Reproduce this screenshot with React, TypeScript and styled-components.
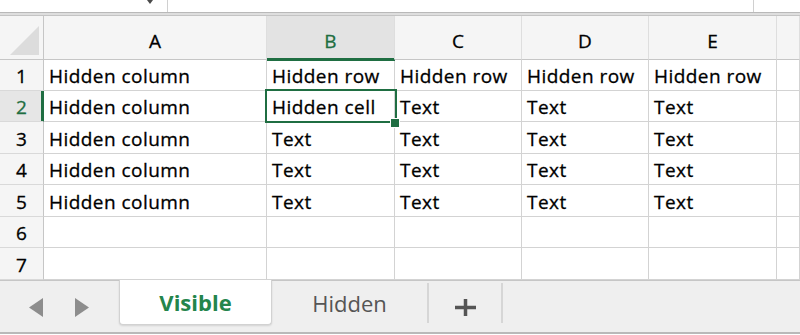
import styled, { createGlobalStyle, css } from 'styled-components';

const GREEN = '#1f6e42';

const GlobalStyle = createGlobalStyle`
  *, *::before, *::after { box-sizing: border-box; }
  html, body { margin: 0; padding: 0; background: #fff; }
  body { overflow: hidden; }
`;

const Sheet = styled.div`
  width: 800px;
  height: 335px;
  display: flex;
  flex-direction: column;
  overflow: hidden;
  background: #fff;
  font-family: 'Open Sans', 'Noto Sans', sans-serif;
  color: #000;
`;

const FormulaBar = styled.div`
  flex: none;
  height: 16px;
  display: flex;
  background: linear-gradient(
    to bottom,
    #fff 0 12px,
    #b9b9b9 12px 13px,
    #dedede 13px 15px,
    #c4c4c4 15px 16px
  );
`;

const NameBox = styled.div`
  width: 168px;
  height: 12px;
  display: flex;
  justify-content: flex-end;
  align-items: flex-start;
  padding-right: 14px;
  border-right: 1px solid #d0d0d0;
`;

const DropArrow = styled.span`
  width: 0;
  height: 0;
  border-left: 3px solid transparent;
  border-right: 3px solid transparent;
  border-top: 4px solid #4a4a4a;
`;

const FormulaInput = styled.div`
  width: 586px;
  height: 12px;
  border-right: 1px solid #d0d0d0;
`;

const Grid = styled.div`
  flex: none;
  display: grid;
  grid-template-columns: 44px 223px 128px 127px 127px 128px 23px;
  grid-template-rows: 44px 31px 31px 32px 31px 32px 31px 32px;
  font-size: 19px;
  -webkit-text-stroke: 0.3px currentColor;
`;

const Corner = styled.div`
  display: flex;
  align-items: flex-end;
  justify-content: flex-end;
  padding: 0 4px 4px 0;
  background: #f5f5f5;
  border-right: 1px solid #c6c6c6;
  border-bottom: 1px solid #c6c6c6;
`;

const ColHeader = styled.div<{ $active?: boolean }>`
  position: relative;
  display: flex;
  align-items: center;
  justify-content: center;
  padding-top: 6px;
  background: #f5f5f5;
  border-right: 1px solid #dedede;
  border-bottom: 1px solid #c6c6c6;
  ${p =>
    p.$active &&
    css`
      z-index: 1;
      background: #e3e3e3;
      color: ${GREEN};
      border-bottom-color: ${GREEN};
      box-shadow: inset 0 -1px 0 ${GREEN}, 0 1px 0 ${GREEN};
    `}
`;

const RowHeader = styled.div<{ $active?: boolean }>`
  display: flex;
  align-items: center;
  justify-content: center;
  padding-top: 2px;
  background: #f5f5f5;
  border-right: 1px solid #c6c6c6;
  border-bottom: 1px solid #d9d9d9;
  ${p =>
    p.$active &&
    css`
      background: #e6e6e6;
      color: ${GREEN};
      border-right-color: ${GREEN};
      box-shadow: inset -2px 0 0 ${GREEN};
    `}
`;

const Cell = styled.div<{ $selected?: boolean }>`
  position: relative;
  display: flex;
  align-items: center;
  padding: 2px 0 0 5px;
  white-space: nowrap;
  letter-spacing: 0.45px;
  border-right: 1px solid #d3d3d3;
  border-bottom: 1px solid #d3d3d3;
  ${p =>
    p.$selected &&
    css`
      z-index: 2;
      &::before {
        content: '';
        position: absolute;
        top: -2px;
        left: -2px;
        right: -3px;
        bottom: -2px;
        border: 2.5px solid ${GREEN};
      }
      &::after {
        content: '';
        position: absolute;
        right: -6px;
        bottom: -7px;
        width: 10px;
        height: 10px;
        background: ${GREEN};
        border: 1px solid #fff;
      }
    `}
`;

const TabBar = styled.div`
  flex: none;
  height: 54px;
  display: flex;
  align-items: flex-start;
  background: #efefef;
  border-top: 1px solid #c6c6c6;
  border-bottom: 2px solid #b9b9b9;
`;

const NavArrows = styled.div`
  width: 119px;
  height: 51px;
  display: flex;
  align-items: center;
  gap: 30px;
  padding: 1px 0 0 29px;
`;

const SheetTab = styled.div<{ $active?: boolean }>`
  height: 44px;
  display: flex;
  align-items: center;
  justify-content: center;
  font-size: 22px;
  color: #555;
  ${p =>
    p.$active
      ? css`
          width: 153px;
          margin-top: -1px;
          height: 45px;
          background: #fff;
          color: #24854c;
          font-weight: 700;
          border: 1px solid #d2d2d2;
          border-top: none;
          border-radius: 0 0 4px 4px;
          box-shadow: 0 1px 2px rgba(0, 0, 0, 0.12);
        `
      : css`
          width: 155px;
        `}
`;

const TabSeparator = styled.div`
  width: 2px;
  height: 40px;
  margin-top: 2px;
  background: #d6d6d6;
`;

const AddTab = styled.div`
  width: 72px;
  height: 51px;
  display: flex;
  align-items: center;
  justify-content: center;
  padding-top: 2px;
`;

const columns = ['A', 'B', 'C', 'D', 'E'];

const rows: string[][] = [
  ['Hidden column', 'Hidden row', 'Hidden row', 'Hidden row', 'Hidden row'],
  ['Hidden column', 'Hidden cell', 'Text', 'Text', 'Text'],
  ['Hidden column', 'Text', 'Text', 'Text', 'Text'],
  ['Hidden column', 'Text', 'Text', 'Text', 'Text'],
  ['Hidden column', 'Text', 'Text', 'Text', 'Text'],
  ['', '', '', '', ''],
  ['', '', '', '', ''],
];

const Arrow = ({ dir }: { dir: 'left' | 'right' }) => (
  <svg width="15" height="19" viewBox="0 0 15 19">
    <polygon
      points={dir === 'left' ? '14,0 14,19 0,9.5' : '1,0 1,19 15,9.5'}
      fill="#8d8d8d"
    />
  </svg>
);

export default function App() {
  return (
    <Sheet>
      <GlobalStyle />
      <FormulaBar>
        <NameBox>
          <DropArrow />
        </NameBox>
        <FormulaInput />
      </FormulaBar>

      <Grid>
        <Corner>
          <svg width="29" height="29" viewBox="0 0 29 29">
            <polygon points="29,0 29,29 0,29" fill="#dcdcdc" />
          </svg>
        </Corner>
        {columns.map(c => (
          <ColHeader key={c} $active={c === 'B'}>
            {c}
          </ColHeader>
        ))}
        <ColHeader />

        {rows.map((row, r) => (
          <>
            <RowHeader key={`h${r}`} $active={r === 1}>
              {r + 1}
            </RowHeader>
            {row.map((text, c) => (
              <Cell key={`${r}-${c}`} $selected={r === 1 && c === 1}>
                {text}
              </Cell>
            ))}
            <Cell key={`${r}-f`} />
          </>
        ))}
      </Grid>

      <TabBar>
        <NavArrows>
          <Arrow dir="left" />
          <Arrow dir="right" />
        </NavArrows>
        <SheetTab $active>Visible</SheetTab>
        <SheetTab>Hidden</SheetTab>
        <TabSeparator />
        <AddTab>
          <svg width="21" height="17" viewBox="0 0 21 17">
            <path d="M0 8.5H21M10.5 0V17" stroke="#555" strokeWidth="3.5" />
          </svg>
        </AddTab>
        <TabSeparator />
      </TabBar>
    </Sheet>
  );
}
